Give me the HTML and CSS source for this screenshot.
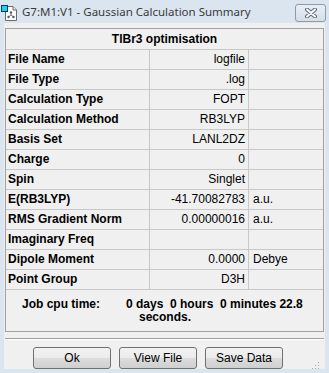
FILE: index.html
```html
<!DOCTYPE html>
<html lang="en">

<head>
    <meta charset="UTF-8">
    <title>G7:M1:V1 - Gaussian Calculation Summary</title>
    <link rel="stylesheet" href="styles.css">
</head>

<body>
    <div class="window">
        <!-- Title bar -->
        <div class="titlebar">
            <svg class="app-icon" width="17" height="17" viewBox="0 0 17 17">
                <path d="M4.5 2.5 H12 L15.5 6 V16.5 H4.5 Z" fill="#fff" stroke="#6b6b6b" />
                <path d="M12 2.5 V6 H15.5" fill="#e8e8e8" stroke="#6b6b6b" />
                <circle cx="10" cy="8.5" r="1.2" fill="#555" />
                <circle cx="7.5" cy="13" r="1.2" fill="#555" />
                <circle cx="12.5" cy="13" r="1.2" fill="#555" />
                <path d="M10 8.5 V11 M10 11 L7.5 13 M10 11 L12.5 13" stroke="#777" stroke-width="1" />
                <rect x="0.5" y="1.5" width="6" height="6" fill="#19d6f0" stroke="#0b3b56" />
            </svg>
            <span class="title">G7:M1:V1 - Gaussian Calculation Summary</span>
            <div class="close-btn">
                <svg width="14" height="10" viewBox="0 0 14 10">
                    <path d="M3 1.5 L11 8.5 M11 1.5 L3 8.5" stroke="#5d6673" stroke-width="4" stroke-linecap="round" />
                    <path d="M3 1.5 L11 8.5 M11 1.5 L3 8.5" stroke="#fff" stroke-width="2" stroke-linecap="round" />
                </svg>
            </div>
        </div>

        <!-- Client area -->
        <div class="client">
            <div class="summary">
                <div class="summary-head">TlBr3 optimisation</div>
                <div class="row"><div class="label">File Name</div><div class="value">logfile</div><div class="unit"></div></div>
                <div class="row"><div class="label">File Type</div><div class="value">.log</div><div class="unit"></div></div>
                <div class="row"><div class="label">Calculation Type</div><div class="value">FOPT</div><div class="unit"></div></div>
                <div class="row"><div class="label">Calculation Method</div><div class="value">RB3LYP</div><div class="unit"></div></div>
                <div class="row"><div class="label">Basis Set</div><div class="value">LANL2DZ</div><div class="unit"></div></div>
                <div class="row"><div class="label">Charge</div><div class="value">0</div><div class="unit"></div></div>
                <div class="row"><div class="label">Spin</div><div class="value">Singlet</div><div class="unit"></div></div>
                <div class="row"><div class="label">E(RB3LYP)</div><div class="value">-41.70082783</div><div class="unit">a.u.</div></div>
                <div class="row"><div class="label">RMS Gradient Norm</div><div class="value">0.00000016</div><div class="unit">a.u.</div></div>
                <div class="row"><div class="label">Imaginary Freq</div><div class="value"></div><div class="unit"></div></div>
                <div class="row"><div class="label">Dipole Moment</div><div class="value">0.0000</div><div class="unit">Debye</div></div>
                <div class="row"><div class="label">Point Group</div><div class="value">D3H</div><div class="unit"></div></div>

                <!-- Job time -->
                <div class="job-time">
                    <div class="job-label">Job cpu time:</div>
                    <div class="job-value">
                        <div>0 days&nbsp; 0 hours&nbsp; 0 minutes 22.8</div>
                        <div class="job-cont">seconds.</div>
                    </div>
                </div>
            </div>

            <div class="separator"></div>

            <div class="buttons">
                <button class="btn">Ok</button>
                <button class="btn">View File</button>
                <button class="btn">Save Data</button>
                <svg class="grip" width="8" height="8" viewBox="0 0 8 8">
                    <rect x="6" y="0" width="1" height="1" fill="#a9a9a9" />
                    <rect x="3" y="3" width="1" height="1" fill="#a9a9a9" />
                    <rect x="6" y="3" width="1" height="1" fill="#a9a9a9" />
                    <rect x="0" y="6" width="1" height="1" fill="#a9a9a9" />
                    <rect x="3" y="6" width="1" height="1" fill="#a9a9a9" />
                    <rect x="6" y="6" width="1" height="1" fill="#a9a9a9" />
                </svg>
            </div>
        </div>
    </div>
</body>

</html>
```

FILE: styles.css
```css
/* Reset */
* {
    margin: 0;
    padding: 0;
    box-sizing: border-box;
}

body {
    width: 329px;
    height: 373px;
    overflow: hidden;
    background: #dbe5f0;
    font-family: 'Liberation Sans', Arial, sans-serif;
    font-size: 12px;
    color: #000;
}

.window {
    display: flex;
    flex-direction: column;
    height: 373px;
}

/* Title bar */
.titlebar {
    height: 23px;
    display: flex;
    align-items: center;
    padding: 0 3px 0 1px;
}

.app-icon {
    margin-right: 4px;
    margin-top: 1px;
}

.title {
    font-family: 'Noto Sans', 'Open Sans', sans-serif;
    font-size: 11.5px;
    color: #3a3a3a;
    flex: 1;
}

.close-btn {
    width: 31px;
    height: 18px;
    border: 1px solid #8f9aa8;
    border-radius: 3px;
    background: linear-gradient(#e8eef5, #d5dfea);
    display: flex;
    justify-content: center;
    align-items: center;
    margin-top: 2px;
}

/* Client area */
.client {
    flex: 1;
    margin: 0 4px 4px;
    background: #f0f0f0;
    padding: 5px 0 0 1px;
    display: flex;
    flex-direction: column;
}

.summary {
    width: 319px;
    border: 1px solid #a0a0a0;
}

.summary-head {
    height: 21px;
    line-height: 20px;
    text-align: center;
    font-weight: bold;
    border-bottom: 1px solid #c8c8c8;
}

.row {
    display: grid;
    grid-template-columns: 144px 99px 74px;
    height: 20px;
    line-height: 19px;
    border-bottom: 1px solid #c8c8c8;
}

.label {
    font-weight: bold;
    padding-left: 2px;
    border-right: 1px solid #c8c8c8;
    white-space: nowrap;
}

.value {
    text-align: right;
    padding-right: 3px;
    border-right: 1px solid #c8c8c8;
}

.unit {
    padding-left: 4px;
}

/* Job cpu time */
.job-time {
    display: flex;
    height: 41px;
    padding-top: 8px;
    line-height: 13px;
    font-weight: bold;
}

.job-label {
    width: 120px;
    padding-left: 16px;
}

.job-cont {
    padding-left: 13px;
}

.separator {
    margin: 6px 0 0 0;
    width: 319px;
    height: 2px;
    border-top: 1px solid #a0a0a0;
    border-bottom: 1px solid #fff;
}

/* Buttons */
.buttons {
    display: flex;
    gap: 8px;
    padding: 7px 0 0 28px;
}

.btn {
    width: 78px;
    height: 22px;
    font-family: 'Liberation Sans', Arial, sans-serif;
    font-size: 12px;
    color: #000;
    border: 1px solid #707070;
    border-radius: 3px;
    background: linear-gradient(#f2f2f2 0%, #ebebeb 50%, #dddddd 51%, #cfcfcf 100%);
    cursor: pointer;
}

.grip {
    margin-left: auto;
    margin-right: 5px;
    align-self: flex-end;
    margin-bottom: -1px;
}
```
